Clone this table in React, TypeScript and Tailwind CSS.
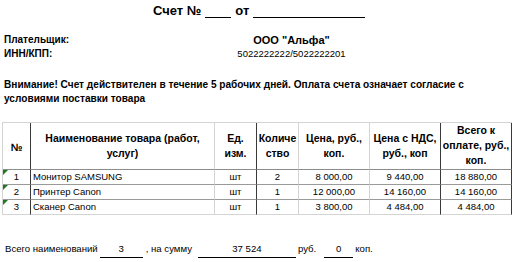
import React from 'react';

const rows = [
  { n: '1', name: 'Монитор SAMSUNG', unit: 'шт', qty: '2', price: '8 000,00', vat: '9 440,00', total: '18 880,00' },
  { n: '2', name: 'Принтер Canon', unit: 'шт', qty: '1', price: '12 000,00', vat: '14 160,00', total: '14 160,00' },
  { n: '3', name: 'Сканер Canon', unit: 'шт', qty: '1', price: '3 800,00', vat: '4 484,00', total: '4 484,00' },
];

const light = 'border-r border-r-[#d4d4d4]';
const dark = 'border-r border-r-[#3a3a3a]';

export default function App() {
  return (
    <div className="w-[523px] h-[262px] bg-white text-black overflow-hidden" style={{ fontFamily: '"Liberation Sans", Arial, sans-serif' }}>
      {/* title */}
      <div className="h-[18px] pt-[1px] pl-[153px] flex items-end text-[13px] font-bold leading-[15px]">
        <span>Счет №</span>
        <span className="inline-block w-[26px] ml-[4px] border-b border-black h-[13px]"></span>
        <span className="ml-[4px]">от</span>
        <span className="inline-block w-[112px] ml-[4px] border-b border-black h-[13px]"></span>
      </div>

      {/* payer */}
      <div className="mt-[15px] grid grid-cols-[210px_155px] text-[10px] leading-[14px] pl-[4px]">
        <div className="font-bold">Плательщик:</div>
        <div className="font-bold text-center text-[11px]">ООО "Альфа"</div>
        <div className="font-bold">ИНН/КПП:</div>
        <div className="text-center text-[9.5px]">5022222222/5022222201</div>
      </div>

      {/* notice */}
      <div className="mt-[17px] pl-[4px] text-[10.1px] leading-[14px] font-bold">
        Внимание! Счет действителен в течение 5 рабочих дней. Оплата счета означает согласие с
        <br />
        условиями поставки товара
      </div>

      {/* table */}
      <div className="mt-[16px] pl-[2px]">
        <table className="border-separate border-spacing-0 table-fixed w-[510px] border-t border-l border-[#d4d4d4]">
          <colgroup>
            <col className="w-[28px]" />
            <col className="w-[184px]" />
            <col className="w-[42px]" />
            <col className="w-[42px]" />
            <col className="w-[71px]" />
            <col className="w-[71px]" />
            <col className="w-[71px]" />
          </colgroup>
          <thead>
            <tr className="h-[42px] text-[10.5px] leading-[15px] font-bold text-center align-middle">
              <th className={`${dark} border-b border-b-[#8c8c8c] pt-[3px]`}>№</th>
              <th className={`${light} border-b border-b-[#8c8c8c]`}>
                Наименование товара (работ,
                <br />
                услуг)
              </th>
              <th className={`${dark} border-b border-b-[#8c8c8c]`}>
                Ед.
                <br />
                изм.
              </th>
              <th className={`${light} border-b border-b-[#8c8c8c] whitespace-nowrap`}>
                Количе
                <br />
                ство
              </th>
              <th className={`${light} border-b border-b-[#8c8c8c]`}>
                Цена, руб.,
                <br />
                коп.
              </th>
              <th className={`${dark} border-b border-b-[#8c8c8c]`}>
                Цена с НДС,
                <br />
                руб., коп
              </th>
              <th className={`${dark} border-b border-b-[#8c8c8c] pb-[1px]`}>
                Всего к
                <br />
                оплате, руб.,
                <br />
                коп.
              </th>
            </tr>
          </thead>
          <tbody>
            {rows.map((r, i) => {
              const b = i === rows.length - 1 ? 'border-b border-b-[#d4d4d4]' : 'border-b border-b-[#9a9a9a]';
              return (
                <tr key={r.n} className="h-[15px] text-[9.5px] leading-[14px]">
                  <td className={`${dark} ${b} relative text-center`}>
                    <span className="absolute left-0 top-0 w-0 h-0 border-t-[5px] border-t-[#1f7a1f] border-r-[5px] border-r-transparent"></span>
                    {r.n}
                  </td>
                  <td className={`${light} ${b} pl-[2px]`}>{r.name}</td>
                  <td className={`${dark} ${b} text-center`}>{r.unit}</td>
                  <td className={`${light} ${b} text-center`}>{r.qty}</td>
                  <td className={`${light} ${b} text-center`}>{r.price}</td>
                  <td className={`${dark} ${b} text-center`}>{r.vat}</td>
                  <td className={`${dark} ${b} text-center`}>{r.total}</td>
                </tr>
              );
            })}
          </tbody>
        </table>
      </div>

      {/* footer */}
      <div className="mt-[27px] pl-[5px] flex items-start text-[9.6px] leading-[14px]">
        <span>Всего наименований</span>
        <span className="ml-[2px] w-[43px] text-center border-b border-black h-[16px]">3</span>
        <span className="ml-[3px]">, на сумму</span>
        <span className="ml-[6px] w-[98px] text-center border-b border-black h-[16px]">37 524</span>
        <span className="ml-[2px]">руб.</span>
        <span className="ml-[8px] w-[29px] text-center border-b border-black h-[16px]">0</span>
        <span className="ml-[2px]">коп.</span>
      </div>
    </div>
  );
}
